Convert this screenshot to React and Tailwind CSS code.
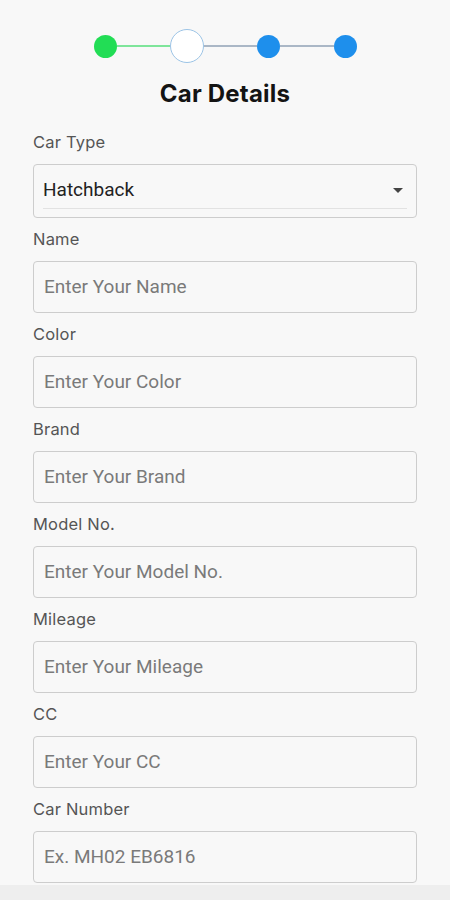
import { useState } from "react";

const fields = [
    { label: "Name", placeholder: "Enter Your Name" },
    { label: "Color", placeholder: "Enter Your Color" },
    { label: "Brand", placeholder: "Enter Your Brand" },
    { label: "Model No.", placeholder: "Enter Your Model No." },
    { label: "Mileage", placeholder: "Enter Your Mileage" },
    { label: "CC", placeholder: "Enter Your CC" },
    { label: "Car Number", placeholder: "Ex. MH02 EB6816" },
];

const labelFont = { fontFamily: "Inter, 'Noto Sans', sans-serif" };
const inputFont = { fontFamily: "Roboto, 'Liberation Sans', sans-serif" };

const Stepper = () => {
    return (
        <div className="flex items-center justify-center h-[34px]">
            <div className="w-[23px] h-[23px] rounded-full bg-[#22dd55]" />
            <div className="w-[53px] h-[2px] bg-[#7ee59a]" />
            <div className="w-[34px] h-[34px] rounded-full bg-white border border-[#9cc4e6]" />
            <div className="w-[53px] h-[2px] bg-[#aab7c6]" />
            <div className="w-[23px] h-[23px] rounded-full bg-[#1e8fec]" />
            <div className="w-[54px] h-[2px] bg-[#aab7c6]" />
            <div className="w-[23px] h-[23px] rounded-full bg-[#1e8fec]" />
        </div>
    )
}

const App = () => {
    const [values, setvalues] = useState({});

    return (
        <div className="w-[450px] h-[900px] overflow-hidden bg-[#f8f8f8] flex flex-col">
            <div className="pt-[29px] px-[33px]">
                <Stepper />

                <h1 className="mt-[17px] h-[28px] leading-[28px] text-center text-[24px] font-bold text-[#141414] tracking-[0.2px]" style={{ fontFamily: "Inter, 'Noto Sans', sans-serif" }}>
                    Car Details
                </h1>

                <div className="mt-[24px] flex flex-col gap-[11px]">
                    {/* Car Type */}
                    <div className="flex flex-col">
                        <label className="h-[20px] leading-[20px] text-[16.5px] text-[#555] tracking-[0.2px]" style={labelFont}>Car Type</label>
                        <div className="mt-3 h-[54px] border border-[#cdcdcd] rounded-[4px] px-[9px] flex flex-col justify-end pb-[8px]">
                            <div className="flex items-center justify-between border-b border-[#e2e2e2] pb-[6px]">
                                <span className="text-[19px] leading-[24px] text-[#222]" style={inputFont}>Hatchback</span>
                                <span className="w-0 h-0 border-l-[5px] border-r-[5px] border-t-[5px] border-l-transparent border-r-transparent border-t-[#444] mr-[4px]" />
                            </div>
                        </div>
                    </div>

                    {fields.map((item, index) => (
                        <div key={index} className="flex flex-col">
                            <label className="h-[20px] leading-[20px] text-[16.5px] text-[#555] tracking-[0.2px]" style={labelFont}>{item.label}</label>
                            <input
                                value={values[item.label] || ""}
                                onChange={(e) => setvalues(prev => ({ ...prev, [item.label]: e.target.value }))}
                                placeholder={item.placeholder}
                                className="mt-3 h-[52px] border border-[#cdcdcd] rounded-[4px] px-[10px] pb-[2px] bg-transparent text-[19px] text-[#222] placeholder:text-[#7a7a7a] outline-none"
                                style={inputFont}
                            />
                        </div>
                    ))}
                </div>
            </div>

            <div className="mt-[2px] flex-1 bg-[#eeeeee]" />
        </div>
    )
}

export default App
